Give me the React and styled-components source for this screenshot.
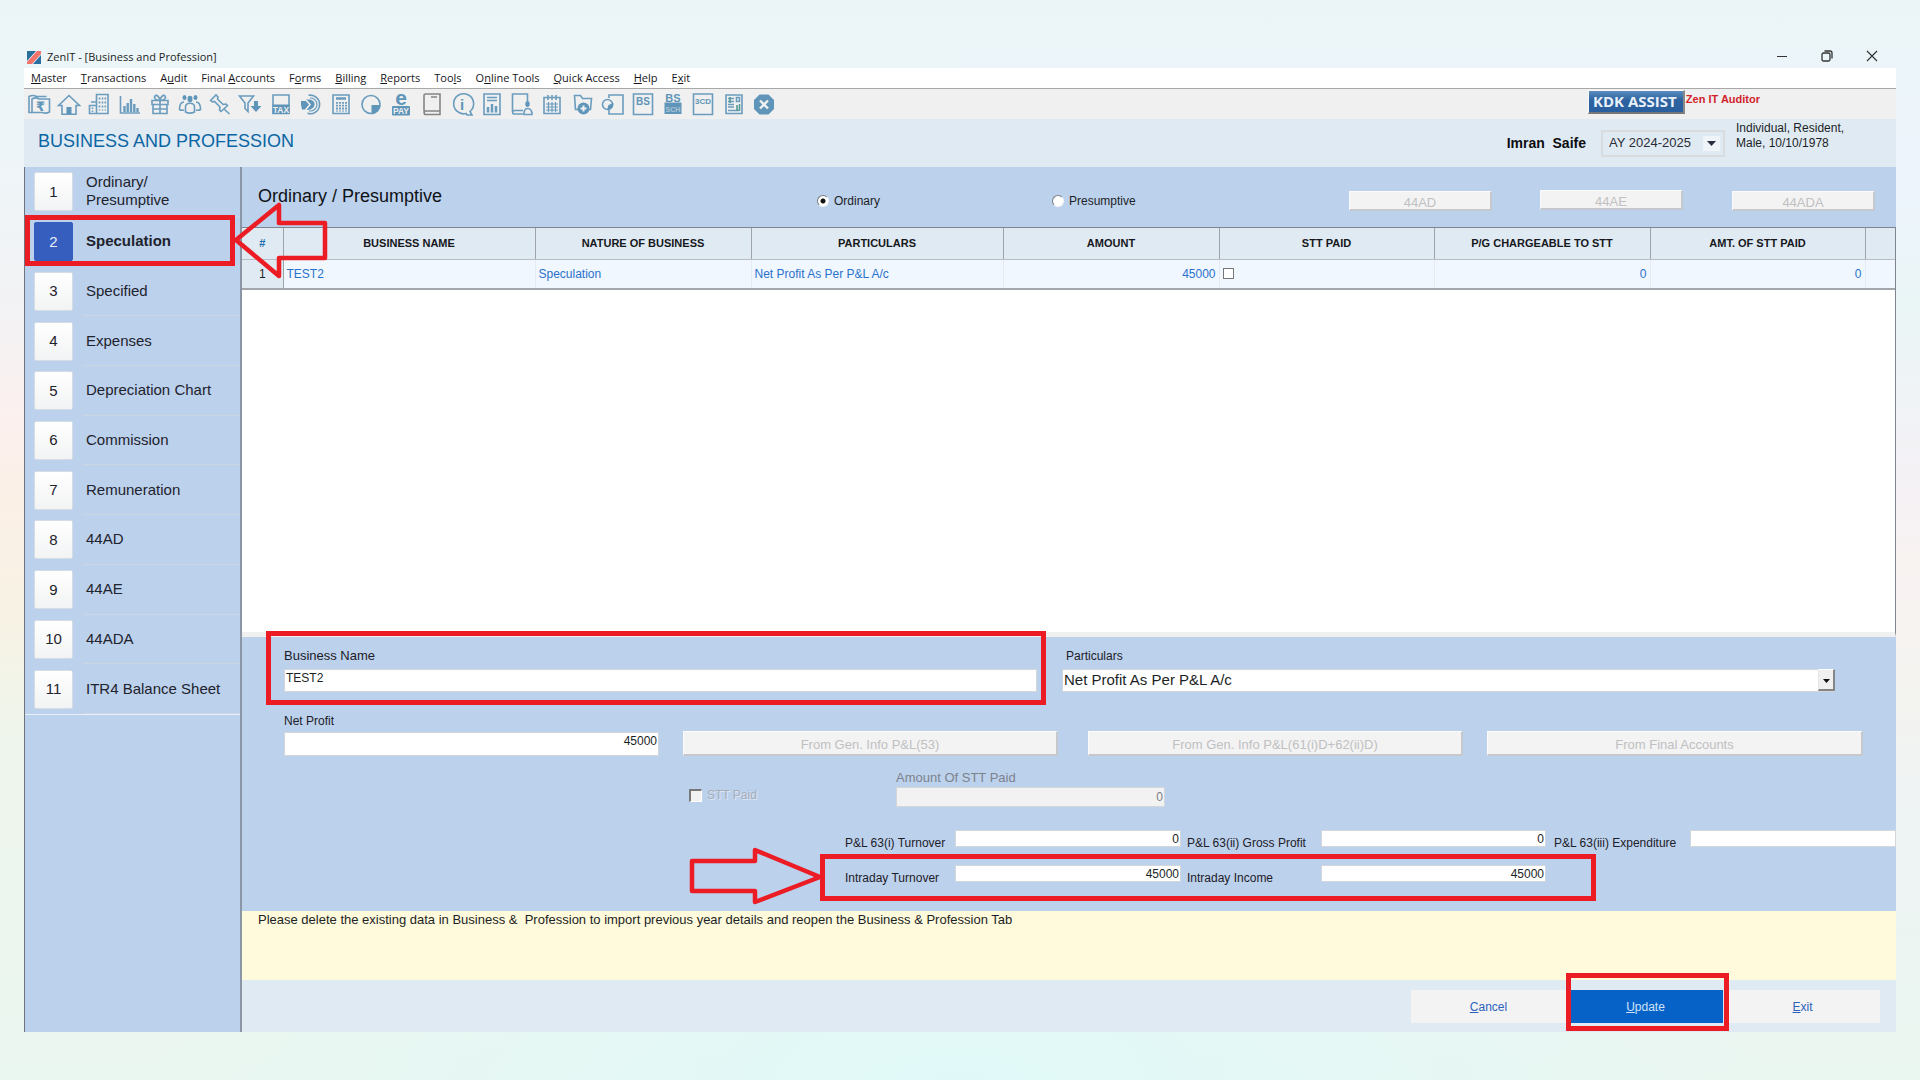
import { useState } from "react";
import styled, { createGlobalStyle, css } from "styled-components";

const GlobalStyle = createGlobalStyle`
  *,
  *::before,
  *::after {
    box-sizing: border-box;
  }

  body {
    margin: 0;
    font-family: "Liberation Sans", Arial, sans-serif;
    font-size: 12px;
    line-height: 16px;
    color: #1c1f26;
    background:
      radial-gradient(ellipse 42% 300px at 50% 100%, #e0f9f8 0%, #e0f9f800 100%),
      linear-gradient(#ebf5f7 0%, #edf5f9 12%, #f2f2f4 28%, #fbf0ee 39%, #fbf0e6 46%, #f7f2e4 57%, #eef5ec 69%, #eaf6f0 100%) left / 50% 100% no-repeat,
      linear-gradient(#ebf5f7 0%, #edf4fc 17%, #eaf5f6 28%, #f4f1f5 44%, #f8f2f1 52%, #f3f3f0 65%, #eef3f4 76%, #eaf6f0 100%) right / 50% 100% no-repeat;
  }

  button,
  input,
  select {
    font: inherit;
    color: inherit;
  }
`;

const Page = styled.div`
  display: flex;
  min-height: 100vh;
  padding: 44px 24px 48px;
`;

const Window = styled.div`
  flex: 1;
  min-width: 0;
  display: flex;
  flex-direction: column;
`;

/* ---------- title bar and menu ---------- */

const TitleBar = styled.header`
  display: flex;
  align-items: center;
  gap: 6px;
  height: 24px;
  padding: 2px 14px 0 3px;
  font-family: "Open Sans", "Noto Sans", sans-serif;
  font-size: 11px;
`;

const WindowButtons = styled.div`
  display: flex;
  gap: 24px;
  margin-left: auto;
`;

const WindowButton = styled.button`
  display: flex;
  align-items: center;
  justify-content: center;
  width: 21px;
  height: 20px;
  padding: 0 0 2px;
  border: 0;
  background: none;
`;

const MenuBar = styled.nav`
  display: flex;
  gap: 14px;
  height: 21px;
  padding: 0 7px;
  border-bottom: 1px solid #a8a8a8;
  background: #fff;
`;

const MenuLink = styled.a`
  font-family: "Open Sans", "Noto Sans", sans-serif;
  font-size: 11px;
  line-height: 20px;
  color: #16161c;
  text-decoration: none;
`;

/* ---------- toolbar ---------- */

const Toolbar = styled.div`
  display: flex;
  align-items: flex-start;
  justify-content: space-between;
  height: 30px;
  padding-left: 3px;
  background: #f0f0f0;
`;

const ToolIcons = styled.div`
  display: flex;
  justify-content: space-between;
  width: 749px;
  padding-top: 3px;
`;

const ToolButton = styled.button`
  width: 24px;
  height: 24px;
  padding: 0;
  border: 0;
  background: none;

  svg {
    display: block;
    overflow: visible;
    fill: none;
    stroke: ${(props) => props.$color || "#6a9cbe"};
    stroke-width: 1.6;
  }

  .solid {
    fill: #5f95b8;
    stroke: none;
  }

  .cut {
    stroke: #f0f0f0;
  }

  text {
    fill: #5f95b8;
    stroke: none;
    font-family: "Liberation Sans", "DejaVu Sans", sans-serif;
    font-weight: bold;
    text-anchor: middle;
  }

  .light {
    fill: #f0f0f0;
  }
`;

const Assist = styled.div`
  display: flex;
  align-items: flex-start;
  gap: 1px;
  padding-right: 136px;
`;

const AssistButton = styled.button`
  width: 97px;
  height: 24px;
  margin-top: 1px;
  padding: 0 2px 2px 0;
  border: solid;
  border-width: 1px 2px 2px 1px;
  border-color: #f8f8f8 #8a8a8a #777 #f8f8f8;
  background: linear-gradient(#5a8cbf, #2d629f 45%, #2a5f9f);
  color: #e8f0fa;
  font-family: "Open Sans", "Noto Sans", sans-serif;
  font-size: 15px;
  font-weight: bold;
  line-height: 18px;
  white-space: nowrap;
`;

const Edition = styled.span`
  padding-top: 2px;
  color: #d2232a;
  font-size: 11px;
  font-weight: bold;
`;

/* ---------- page header ---------- */

const PageHeader = styled.div`
  display: flex;
  align-items: center;
  height: 48px;
  padding: 0 16px 0 14px;
  background: #e0eaf3;
`;

const PageTitle = styled.h1`
  margin: 0 auto 4px 0;
  font-size: 18px;
  font-weight: normal;
  color: #0a66a3;
`;

const Client = styled.strong`
  font-size: 14px;
  color: #0c0c10;
  white-space: pre;
`;

const YearBox = styled.div`
  position: relative;
  width: 124px;
  margin-left: 15px;
`;

const YearSelect = styled.select`
  appearance: none;
  display: block;
  width: 100%;
  height: 27px;
  padding: 0 6px;
  border: 2px solid #d9dcdf;
  border-radius: 0;
  background: transparent;
  font-size: 13px;
  color: #2a2d35;
`;

const YearArrow = styled.svg`
  position: absolute;
  top: 6px;
  right: 5px;
  background: #eff4f9;
  pointer-events: none;
`;

const ClientInfo = styled.p`
  width: 144px;
  margin: 0 0 14px 11px;
  line-height: 15px;
`;

/* ---------- body ---------- */

const Body = styled.div`
  flex: 1;
  display: flex;
`;

const Sidebar = styled.nav`
  width: 218px;
  border: solid #70757d;
  border-width: 0 1px;
  border-right: 2px solid #8a95a5;
  background: #bcd1ec;
`;

const StepList = styled.ol`
  display: grid;
  grid-auto-rows: 1fr;
  min-height: 548px;
  margin: 0;
  padding: 0;
  border-bottom: 1px solid #e8eff8;
  list-style: none;
`;

const Step = styled.li`
  position: relative;
  display: flex;
`;

const StepLink = styled.a`
  flex: 1;
  display: flex;
  align-items: center;
  gap: 10px;
  padding-left: 9px;
  font-size: 15px;
  line-height: 18px;
  color: #1e232c;
  text-decoration: none;
`;

const StepNumber = styled.span`
  display: flex;
  align-items: center;
  justify-content: center;
  width: 39px;
  height: 39px;
  border: 1px solid #d6dce4;
  border-radius: 2px;
  background: linear-gradient(#fff, #f2f3f4);

  ${(props) =>
    props.$active &&
    css`
      border-color: #365ebf;
      background: #365ebf;
      color: #e9effa;
    `}
`;

const StepLabel = styled.span`
  flex: 1;
  display: flex;
  align-items: center;
  align-self: stretch;
  padding-left: 3px;
  border-bottom: 1px solid #ccd5e2;
  font-weight: ${(props) => (props.$active ? "bold" : "normal")};
  white-space: pre-line;
`;

const Content = styled.main`
  flex: 1;
  min-width: 0;
  display: flex;
  flex-direction: column;
  background: #bcd1ec;
`;

const TypeBar = styled.div`
  display: grid;
  grid-template-columns: 559fr 235fr 297fr 143fr 48px 143fr 49px 143fr;
  height: 60px;
  padding: 0 21px 0 16px;
`;

const TypeTitle = styled.h2`
  margin: 20px 0 0;
  font-size: 18px;
  font-weight: normal;
  line-height: 18px;
  color: #0e1116;
`;

const RadioLabel = styled.label`
  display: flex;
  align-items: center;
  gap: 5px;
  height: 16px;
  margin-top: 26px;
`;

const Radio = styled.input`
  appearance: none;
  width: 12px;
  height: 12px;
  margin: 0;
  border: 1px solid;
  border-color: #7d7d7d #f4f4f4 #f4f4f4 #7d7d7d;
  border-radius: 50%;
  background: #fff;

  &:checked {
    background: radial-gradient(circle, #111 2px, #fff 3px);
  }
`;

const PlainButton = styled.button`
  height: ${(props) => props.$height || 25}px;
  padding: 3px 0 0;
  border: solid;
  border-width: 1px 2px 2px 1px;
  border-color: #fbfbfb #c5c9ce #c5c9ce #fbfbfb;
  background: #f3f3f3;
  font-size: 13px;
  line-height: 15px;
  color: #bfc0c2;

  &:disabled {
    color: #bfc0c2;
  }
`;

const TypeButton = styled(PlainButton)`
  grid-column: ${(props) => props.$column};
  margin-top: ${(props) => props.$top || 24}px;
`;

/* ---------- grid of entries ---------- */

const TableArea = styled.div`
  flex: 1;
  border: 1px solid #7f858d;
  border-bottom: 5px solid #f0f0f0;
  border-left: 0;
  background: #fff;
`;

const Table = styled.table`
  width: 100%;
  border-collapse: collapse;
  table-layout: fixed;
`;

const HeadCell = styled.th`
  width: ${(props) => props.$share}%;
  height: 31px;
  padding: 0;
  border-right: 1px solid #9ea3a9;
  border-bottom: 1px solid #b9bcc2;
  background: #e0eaf3;
  font-size: 11px;
  color: ${(props) => props.$color || "#16181c"};

  &:last-child {
    border-right: 0;
  }
`;

const Cell = styled.td`
  height: 30px;
  padding: 0 3px;
  border-right: 1px solid #e6ebf2;
  border-bottom: 2px solid #a3a6aa;
  background: #f0f7fe;
  color: #2a72cc;
  text-align: ${(props) => props.$align || "left"};

  &:last-child {
    border-right: 0;
  }
`;

const IndexCell = styled(Cell)`
  border-right-color: #9ea3a9;
  background: #e0eaf3;
  color: #1c1f26;
  text-align: center;
`;

const GridCheck = styled.input`
  appearance: none;
  display: block;
  width: 11px;
  height: 11px;
  margin: 0;
  border: 1px solid #777;
  background: #fff;
`;

/* ---------- form ---------- */

const Form = styled.form`
  padding: 11px 0 25px;
`;

const Row = styled.div`
  display: grid;
  grid-template-columns: ${(props) => props.$columns};
  align-items: ${(props) => props.$align || "end"};
  margin-bottom: ${(props) => props.$bottom || 0}px;
`;

const Field = styled.div`
  position: relative;
  grid-column: ${(props) => props.$column};
  display: flex;
  flex-direction: column;
  gap: ${(props) => props.$gap || 0}px;
`;

const Label = styled.label`
  font-size: ${(props) => props.$size || 13}px;
  line-height: 16px;
  padding-left: ${(props) => props.$indent || 0}px;
  color: ${(props) => (props.$muted ? "#7d838d" : "#1c2028")};
  white-space: nowrap;
`;

const TextBox = styled.input`
  width: 100%;
  min-width: 0;
  height: ${(props) => props.$height || 23}px;
  padding: 0 1px ${(props) => (props.$flush ? 0 : 6)}px;
  border: 1px solid #d3d7dc;
  border-radius: 0;
  outline: 0;
  background: #fff;
  text-align: ${(props) => (props.$number ? "right" : "left")};

  &:disabled {
    background: #f2f2f2;
    color: #7b7d82;
  }
`;

const SelectBox = styled.div`
  position: relative;
`;

const ParticularsSelect = styled.select`
  appearance: none;
  display: block;
  width: 100%;
  height: 23px;
  padding: 0 20px 2px 1px;
  border: 1px solid #d3d7dc;
  border-radius: 0;
  background: #fff;
  font-size: 15px;
`;

const SelectArrow = styled.svg`
  position: absolute;
  top: 0;
  right: 0;
  border: solid;
  border-width: 1px 2px 2px 1px;
  border-color: #fff #858585 #858585 #e6e6e6;
  background: #f0f0f0;
  pointer-events: none;
`;

const CheckLabel = styled.label`
  grid-column: 2;
  display: flex;
  align-items: center;
  gap: 5px;
  height: 16px;
  margin-bottom: 4px;
  color: #a5adb9;
  text-shadow: 1px 1px 0 #dce7f5;
`;

const SunkenCheck = styled.input`
  appearance: none;
  width: 13px;
  height: 13px;
  margin: 0;
  border: solid;
  border-width: 2px 1px 1px 2px;
  border-color: #777 #fff #fff #777;
  background: #f2f2f2;
`;

const SideLabel = styled(Label)`
  padding-top: 5px;
`;

const Notice = styled.p`
  min-height: 69px;
  margin: 0;
  padding: 1px 16px;
  background: #fefadb;
  font-size: 13px;
  white-space: pre-wrap;
`;

const Footer = styled.footer`
  display: flex;
  justify-content: flex-end;
  gap: 2px;
  padding: 10px 16px 9px;
  background: #e0eaf3;
`;

const FooterItem = styled.div`
  position: relative;
  width: 155px;
`;

const FooterButton = styled.button`
  width: 100%;
  height: 33px;
  padding: 0;
  border: 0;
  background: ${(props) => (props.$primary ? "#0762c8" : "#f3f3f3")};
  color: ${(props) => (props.$primary ? "#cfe2f8" : "#2c62bd")};
`;

/* ---------- red markers lying over the window ---------- */

const Marker = styled.div`
  position: absolute;
  z-index: 1;
  inset: ${(props) => props.$inset};
  border: 5px solid #ec1c24;
  pointer-events: none;
`;

const MarkerArrow = styled.svg`
  position: absolute;
  z-index: 2;
  top: ${(props) => props.$top}px;
  right: ${(props) => props.$right};
  fill: none;
  stroke: #ec1c24;
  stroke-width: 4.5;
  stroke-linejoin: round;
  pointer-events: none;
`;

const IntradayRow = styled(Row)`
  position: relative;
`;

const MarkerSpan = styled.div`
  position: absolute;
  inset: -11px calc(18% + 2px) -15px calc(35% - 1px);
`;

/* ---------- data ---------- */

// "&" stands before the access key of each entry
const menu = [
  "&Master",
  "&Transactions",
  "A&udit",
  "Final &Accounts",
  "F&orms",
  "&Billing",
  "&Reports",
  "Too&ls",
  "O&nline Tools",
  "&Quick Access",
  "&Help",
  "E&xit",
];

const steps = [
  "Ordinary/\nPresumptive",
  "Speculation",
  "Specified",
  "Expenses",
  "Depreciation Chart",
  "Commission",
  "Remuneration",
  "44AD",
  "44AE",
  "44ADA",
  "ITR4 Balance Sheet",
];

const columns = [
  { title: "#", width: 41, color: "#1c6fb0" },
  { title: "BUSINESS NAME", width: 252 },
  { title: "NATURE OF BUSINESS", width: 216 },
  { title: "PARTICULARS", width: 252 },
  { title: "AMOUNT", width: 216 },
  { title: "STT PAID", width: 215 },
  { title: "P/G CHARGEABLE TO STT", width: 216 },
  { title: "AMT. OF STT PAID", width: 215 },
  { title: "", width: 30 },
];

const totalWidth = columns.reduce((sum, column) => sum + column.width, 0);

const turnoverColumns =
  "603fr 110fr 226fr 6fr 134fr 225fr 8fr 136fr 206fr";

const tools = [
  {
    name: "Folder",
    art: (
      <>
        <path d="M5 20.5H2V4.5c3-1.5 5-1.5 7.500 0h10" />
        <path d="M5 20.5V7c2.500-1.500 5-1.500 7 0h10.500v13c-3 1.500-5 1.500-7 .5H5z" />
        <text x="13.500" y="18.500" fontSize="13">₹</text>
      </>
    ),
  },
  {
    name: "Home",
    art: (
      <>
        <path d="M1.500 13.500 12 3.500l10.500 10H19v8.700H5v-8.700z" />
        <path className="solid" d="M9.500 15h5v7h-5z" />
      </>
    ),
  },
  {
    name: "Buildings",
    art: (
      <>
        <path d="M9.500 21.500V2.500h11.500v19H2.500v-8h7M4 10h5" />
        <path d="M12.500 5.500v13M15.500 5.500v13M18.300 5.500v13" strokeDasharray="2 2" />
        <path d="M5.500 15.500v5" strokeDasharray="1.500 1.500" />
      </>
    ),
  },
  {
    name: "Chart",
    art: (
      <>
        <path d="M2.500 4v17H22" />
        <path d="M6.500 14v6M9.700 11v9M13 7v13M16.300 12v8M19.500 16v4" strokeWidth="2.400" />
      </>
    ),
  },
  {
    name: "Gift",
    art: (
      <>
        <path d="M4 8.500h16v4H4zM5 12.500h14v9H5zM5 17h14M12 8.500v13" />
        <path d="M12 8.500C8 8.500 5.500 6 7 4s4.500 1 5 4.500c.5-3.500 3.500-6.500 5-4.500s-1 4.500-5 4.500z" />
      </>
    ),
  },
  {
    name: "Clients",
    art: (
      <>
        <ellipse className="solid" cx="12" cy="7" rx="2.500" ry="3.200" />
        <ellipse className="solid" cx="6.500" cy="5.500" rx="2" ry="2.500" />
        <ellipse className="solid" cx="17.500" cy="5.500" rx="2" ry="2.500" />
        <path d="M7.500 20v-5c0-5 9-5 9 0v5c-3 1.500-6 1.500-9 0zM6 10c-3 0-4.500 2.500-4.500 7.500 1.500 1 3 1 4.500.5M18 10c3 0 4.500 2.500 4.500 7.500-1.500 1-3 1-4.500.5" />
      </>
    ),
  },
  {
    name: "Pin",
    art: (
      <path d="m2.500 8.500 5.500-5.500 2 2-.5 2 5.500 5.500 3-.5 1.500 1.500-6.500 6-1.500-1.500.5-3-5.500-5.500-2 .5zM16 17l5.500 5" />
    ),
  },
  {
    name: "Filter",
    art: (
      <>
        <path d="M1.500 4h14l-5.500 7v8.500l-3-3V11z" />
        <path className="solid" d="M16 9h4v5h3.500L18 20l-5.500-6H16z" />
      </>
    ),
  },
  {
    name: "Tax",
    art: (
      <>
        <path d="M4 3h16v18.500H4z" />
        <path className="solid" d="M3.500 12.500h17v9.500h-17z" />
        <text className="light" x="12" y="20.500" fontSize="8.500">TAX</text>
      </>
    ),
  },
  {
    name: "Target",
    art: (
      <>
        <path d="M9.500 3.300a9.300 9.300 0 1 1-1 18" />
        <path d="M11 6a6.500 6.500 0 1 1-1 12.800" strokeWidth="1.200" />
        <path className="solid" d="M8.500 7.500c9-1 10 9.500 0 10.500h-2l4-5.500-4-5zM2 9h5.500l3 3.500-3.500 5H3L2 13z" />
        <path className="cut" d="m6.500 7.500 4.500 5-4.500 5.500" />
      </>
    ),
  },
  {
    name: "Calculator",
    art: (
      <>
        <path d="M4 3h16v18.500H4z" />
        <path d="M7 6.500h10" strokeWidth="2.500" />
        <path d="M8 10v9.500M11 10v9.500M14 10v9.500M17 10v9.500" strokeWidth="2" strokeDasharray="1.800 1" />
      </>
    ),
  },
  {
    name: "Pie",
    art: (
      <>
        <circle cx="12" cy="12.500" r="9" />
        <path className="solid" d="M12.500 13h9a9 9 0 0 1-9 9z" />
      </>
    ),
  },
  {
    name: "e-Pay",
    art: (
      <>
        <text x="12" y="12.500" fontSize="21">e</text>
        <rect className="solid" x="3" y="14" width="18" height="9.500" rx="1" />
        <text className="light" x="12" y="22" fontSize="8.500">PAY</text>
      </>
    ),
  },
  {
    name: "Ledger",
    color: "#858585",
    art: (
      <path d="M4 19.500V3.500c0-1 .5-1.500 1.500-1.500H20v20.500H6c-2.500 0-2.500-3.500 0-3.500h14M11 5h6" />
    ),
  },
  {
    name: "Information",
    art: (
      <>
        <path d="M20 19.500 22 23h-5l-1-1.500A10 10 0 1 1 20 19.500z" />
        <text x="12" y="18" fontSize="15" fontFamily="Liberation Serif">i</text>
      </>
    ),
  },
  {
    name: "Report",
    art: (
      <>
        <path d="M4 2h16v20.500H4zM7 5.500h10M7 8.500h10" />
        <path d="M8 15v5.500M12 12v8.500M16 14v6.500" strokeWidth="2.500" />
      </>
    ),
  },
  {
    name: "User ledger",
    art: (
      <>
        <path d="M13 22H4.500c-2.500 0-2.500-3.500 0-3.500H13M2.500 20V2h15v7" />
        <ellipse className="solid" cx="17.500" cy="12" rx="2.200" ry="3" />
        <path d="M14 22.500c0-4 .5-6 3.500-6s4.500 2 4.500 6z" />
      </>
    ),
  },
  {
    name: "Calendar",
    art: (
      <>
        <path d="M4 5.500h16v16H4zM8 3v5M12 3v5M16 3v5" />
        <path d="M6 12h12M6 15h12M6 18h12M8.500 10v10M12 10v10M15.500 10v10" strokeWidth="1.200" />
      </>
    ),
  },
  {
    name: "Add folder",
    art: (
      <>
        <path d="M8 17.500H4.500l-1-14h6l2 3h9l-1 11H17" />
        <circle className="solid" cx="12.500" cy="16.500" r="6" />
        <path className="cut" d="M12.500 13.500v6M9.500 16.500h6" strokeWidth="2" />
      </>
    ),
  },
  {
    name: "Link page",
    art: (
      <>
        <path d="M8 6V3h14v19H8v-4" />
        <circle cx="6.500" cy="12.500" r="5" />
        <path className="solid" d="M6 18c4 0 6.500-2.500 6.500-7l-5 2z" />
      </>
    ),
  },
  {
    name: "Balance sheet",
    art: (
      <>
        <path d="M2.500 2h19v20.500h-19z" />
        <text x="12" y="12.500" fontSize="10">BS</text>
      </>
    ),
  },
  {
    name: "Balance sheet schedule",
    art: (
      <>
        <text x="12" y="10" fontSize="11">BS</text>
        <path className="solid" d="M3.500 10.500h17V22h-17z" />
        <text className="light" x="12" y="19.500" fontSize="7" opacity=".5">SCH</text>
      </>
    ),
  },
  {
    name: "Form 3CD",
    art: (
      <>
        <path d="M2.500 2h19v20.500h-19z" />
        <text x="12" y="11.500" fontSize="8">3CD</text>
      </>
    ),
  },
  {
    name: "Statements",
    art: (
      <>
        <path d="M4 3h16v18.500H4zM6 6.500h6M6 9.500h6M14.500 5.500h3v4h-3zM6 12.500h6M6 15h6M6 18.500h11" />
        <path d="M8 5v6M15 13v6M17.500 12v7" stroke="#4f9a94" />
      </>
    ),
  },
  {
    name: "Close",
    art: (
      <>
        <path className="solid" d="M7.500 2.500h9l5.500 5.500v9l-5.500 5.500h-9L2 17V8z" />
        <path className="cut" d="m8 8.500 8 8M16 8.500l-8 8" strokeWidth="2.400" />
      </>
    ),
  },
];

function AccessText({ children }) {
  const [before, after] = children.split("&");

  return (
    <>
      {before}
      <u>{after[0]}</u>
      {after.slice(1)}
    </>
  );
}

function Title() {
  return (
    <TitleBar>
      <svg width="14" height="15" viewBox="0 0 14 15">
        <path d="M0 1h9L0 11zM14 5v9H6z" fill="#2b6f9e" />
        <path d="M10 1h4v3L5 14H0v-2z" fill="#f4736a" />
      </svg>
      <span>ZenIT - [Business and Profession]</span>
      <WindowButtons>
        <WindowButton aria-label="Minimize">
          <svg width="12" height="12" stroke="#333">
            <path d="M1 6.500h10" />
          </svg>
        </WindowButton>
        <WindowButton aria-label="Restore">
          <svg width="12" height="12" fill="none" stroke="#333" strokeWidth="1.300">
            <rect x="1" y="3" width="8" height="8" rx="1.500" />
            <path d="M3.500 1H9c1.500 0 2 .5 2 2v5.500" />
          </svg>
        </WindowButton>
        <WindowButton aria-label="Close">
          <svg width="12" height="12" stroke="#333" strokeWidth="1.200">
            <path d="m1 1 10 10M11 1 1 11" />
          </svg>
        </WindowButton>
      </WindowButtons>
    </TitleBar>
  );
}

function Tools() {
  return (
    <Toolbar>
      <ToolIcons>
        {tools.map((tool) => (
          <ToolButton key={tool.name} aria-label={tool.name} $color={tool.color}>
            <svg width="24" height="24" viewBox="0 0 24 24">
              {tool.art}
            </svg>
          </ToolButton>
        ))}
      </ToolIcons>
      <Assist>
        <AssistButton>KDK ASSIST</AssistButton>
        <Edition>Zen IT Auditor</Edition>
      </Assist>
    </Toolbar>
  );
}

function Header() {
  return (
    <PageHeader>
      <PageTitle>BUSINESS AND PROFESSION</PageTitle>
      <Client>{"Imran  Saife"}</Client>
      <YearBox>
        <YearSelect aria-label="Assessment year">
          <option>AY 2024-2025</option>
        </YearSelect>
        <YearArrow width="17" height="15">
          <path d="M4 5h9l-4.500 5z" fill="#27303c" />
        </YearArrow>
      </YearBox>
      <ClientInfo>
        Individual, Resident,
        <br />
        Male, 10/10/1978
      </ClientInfo>
    </PageHeader>
  );
}

function Steps() {
  const active = "Speculation";

  return (
    <Sidebar>
      <StepList>
        {steps.map((step, i) => (
          <Step key={step}>
            <StepLink href="#">
              <StepNumber $active={step === active}>{i + 1}</StepNumber>
              <StepLabel $active={step === active}>{step}</StepLabel>
            </StepLink>
            {step === active && (
              <>
                <Marker $inset="-2px 5px 0 0" />
                <MarkerArrow width="96" height="82" $top={-17} $right="-89px">
                  <path d="M3 40 46 5v18h46v35H46v18z" />
                </MarkerArrow>
              </>
            )}
          </Step>
        ))}
      </StepList>
    </Sidebar>
  );
}

function EntryTable() {
  return (
    <TableArea>
      <Table>
        <thead>
          <tr>
            {columns.map((column) => (
              <HeadCell
                key={column.title}
                $share={(column.width / totalWidth) * 100}
                $color={column.color}
              >
                {column.title}
              </HeadCell>
            ))}
          </tr>
        </thead>
        <tbody>
          <tr>
            <IndexCell>1</IndexCell>
            <Cell>TEST2</Cell>
            <Cell>Speculation</Cell>
            <Cell>Net Profit As Per P&L A/c</Cell>
            <Cell $align="right">45000</Cell>
            <Cell>
              <GridCheck type="checkbox" aria-label="STT paid" />
            </Cell>
            <Cell $align="right">0</Cell>
            <Cell $align="right">0</Cell>
            <Cell />
          </tr>
        </tbody>
      </Table>
    </TableArea>
  );
}

function EntryForm() {
  return (
    <Form>
      <Row $columns="42fr 753fr 25fr 773fr 61fr" $bottom={21}>
        <Field $column="2" $gap={5}>
          <Label htmlFor="business">Business Name</Label>
          <TextBox id="business" defaultValue="TEST2" />
          <Marker $inset="-17px -9px -13px -18px" />
        </Field>
        <Field $column="4" $gap={5}>
          <Label htmlFor="particulars" $size={12} $indent={4}>Particulars</Label>
          <SelectBox>
            <ParticularsSelect id="particulars">
              <option>Net Profit As Per P&L A/c</option>
            </ParticularsSelect>
            <SelectArrow width="17" height="22">
              <path d="M4 9h7l-3.500 4z" fill="#111" />
            </SelectArrow>
          </SelectBox>
        </Field>
      </Row>

      <Row $columns="42fr 375fr 24fr 375fr 30fr 375fr 24fr 376fr 33fr" $bottom={14}>
        <Field $column="2" $gap={3}>
          <Label htmlFor="net" $size={12}>Net Profit</Label>
          <TextBox id="net" defaultValue="45000" $number $height={24} />
        </Field>
        <span />
        <PlainButton type="button" disabled>From Gen. Info P&L(53)</PlainButton>
        <span />
        <PlainButton type="button" disabled>From Gen. Info P&L(61(i)D+62(ii)D)</PlainButton>
        <span />
        <PlainButton type="button" disabled>From Final Accounts</PlainButton>
      </Row>

      <Row $columns="447fr 207fr 269fr 731fr" $bottom={23}>
        <CheckLabel>
          <SunkenCheck type="checkbox" disabled />
          STT Paid
        </CheckLabel>
        <Field $column="3" $gap={1}>
          <Label htmlFor="stt" $muted>Amount Of STT Paid</Label>
          <TextBox id="stt" defaultValue="0" $number $flush $height={20} disabled />
        </Field>
      </Row>

      <Row $columns={turnoverColumns} $align="start" $bottom={14}>
        <span />
        <SideLabel htmlFor="turnover" $size={12}>P&L 63(i) Turnover</SideLabel>
        <TextBox id="turnover" defaultValue="0" $number $flush $height={17} />
        <span />
        <SideLabel htmlFor="gross" $size={12}>P&L 63(ii) Gross Profit</SideLabel>
        <TextBox id="gross" defaultValue="0" $number $flush $height={17} />
        <span />
        <SideLabel htmlFor="expenditure" $size={12}>P&L 63(iii) Expenditure</SideLabel>
        <TextBox id="expenditure" $number $flush $height={17} />
      </Row>

      <IntradayRow $columns={turnoverColumns} $align="start">
        <span />
        <SideLabel htmlFor="intraday" $size={12}>Intraday Turnover</SideLabel>
        <TextBox id="intraday" defaultValue="45000" $number $flush $height={17} />
        <span />
        <SideLabel htmlFor="income" $size={12}>Intraday Income</SideLabel>
        <TextBox id="income" defaultValue="45000" $number $flush $height={17} />
        <MarkerSpan>
          <Marker $inset="0" />
          <MarkerArrow width="136" height="62" $top={-9} $right="calc(100% - 4px)">
            <path d="M4 16h63V5l65 27-65 25V46H4z" />
          </MarkerArrow>
        </MarkerSpan>
      </IntradayRow>
    </Form>
  );
}

function Entries() {
  const [kind, setKind] = useState("Ordinary");

  return (
    <Content>
      <TypeBar>
        <TypeTitle>Ordinary / Presumptive</TypeTitle>
        {["Ordinary", "Presumptive"].map((name) => (
          <RadioLabel key={name}>
            <Radio
              type="radio"
              name="kind"
              checked={kind === name}
              onChange={() => setKind(name)}
            />
            {name}
          </RadioLabel>
        ))}
        <TypeButton $column="4" $height={20} disabled>44AD</TypeButton>
        <TypeButton $column="6" $height={20} $top={23} disabled>44AE</TypeButton>
        <TypeButton $column="8" $height={20} disabled>44ADA</TypeButton>
      </TypeBar>
      <EntryTable />
      <EntryForm />
      <Notice>
        {"Please delete the existing data in Business &  Profession to import previous year details and reopen the Business & Profession Tab"}
      </Notice>
      <Footer>
        <FooterItem>
          <FooterButton>
            <AccessText>&Cancel</AccessText>
          </FooterButton>
        </FooterItem>
        <FooterItem>
          <FooterButton $primary>
            <AccessText>&Update</AccessText>
          </FooterButton>
          <Marker $inset="-17px -6px -8px -2px" />
        </FooterItem>
        <FooterItem>
          <FooterButton>
            <AccessText>&Exit</AccessText>
          </FooterButton>
        </FooterItem>
      </Footer>
    </Content>
  );
}

function App() {
  return (
    <>
      <GlobalStyle />
      <Page>
        <Window>
          <Title />
          <MenuBar>
            {menu.map((item) => (
              <MenuLink key={item} href="#">
                <AccessText>{item}</AccessText>
              </MenuLink>
            ))}
          </MenuBar>
          <Tools />
          <Header />
          <Body>
            <Steps />
            <Entries />
          </Body>
        </Window>
      </Page>
    </>
  );
}

export default App;
